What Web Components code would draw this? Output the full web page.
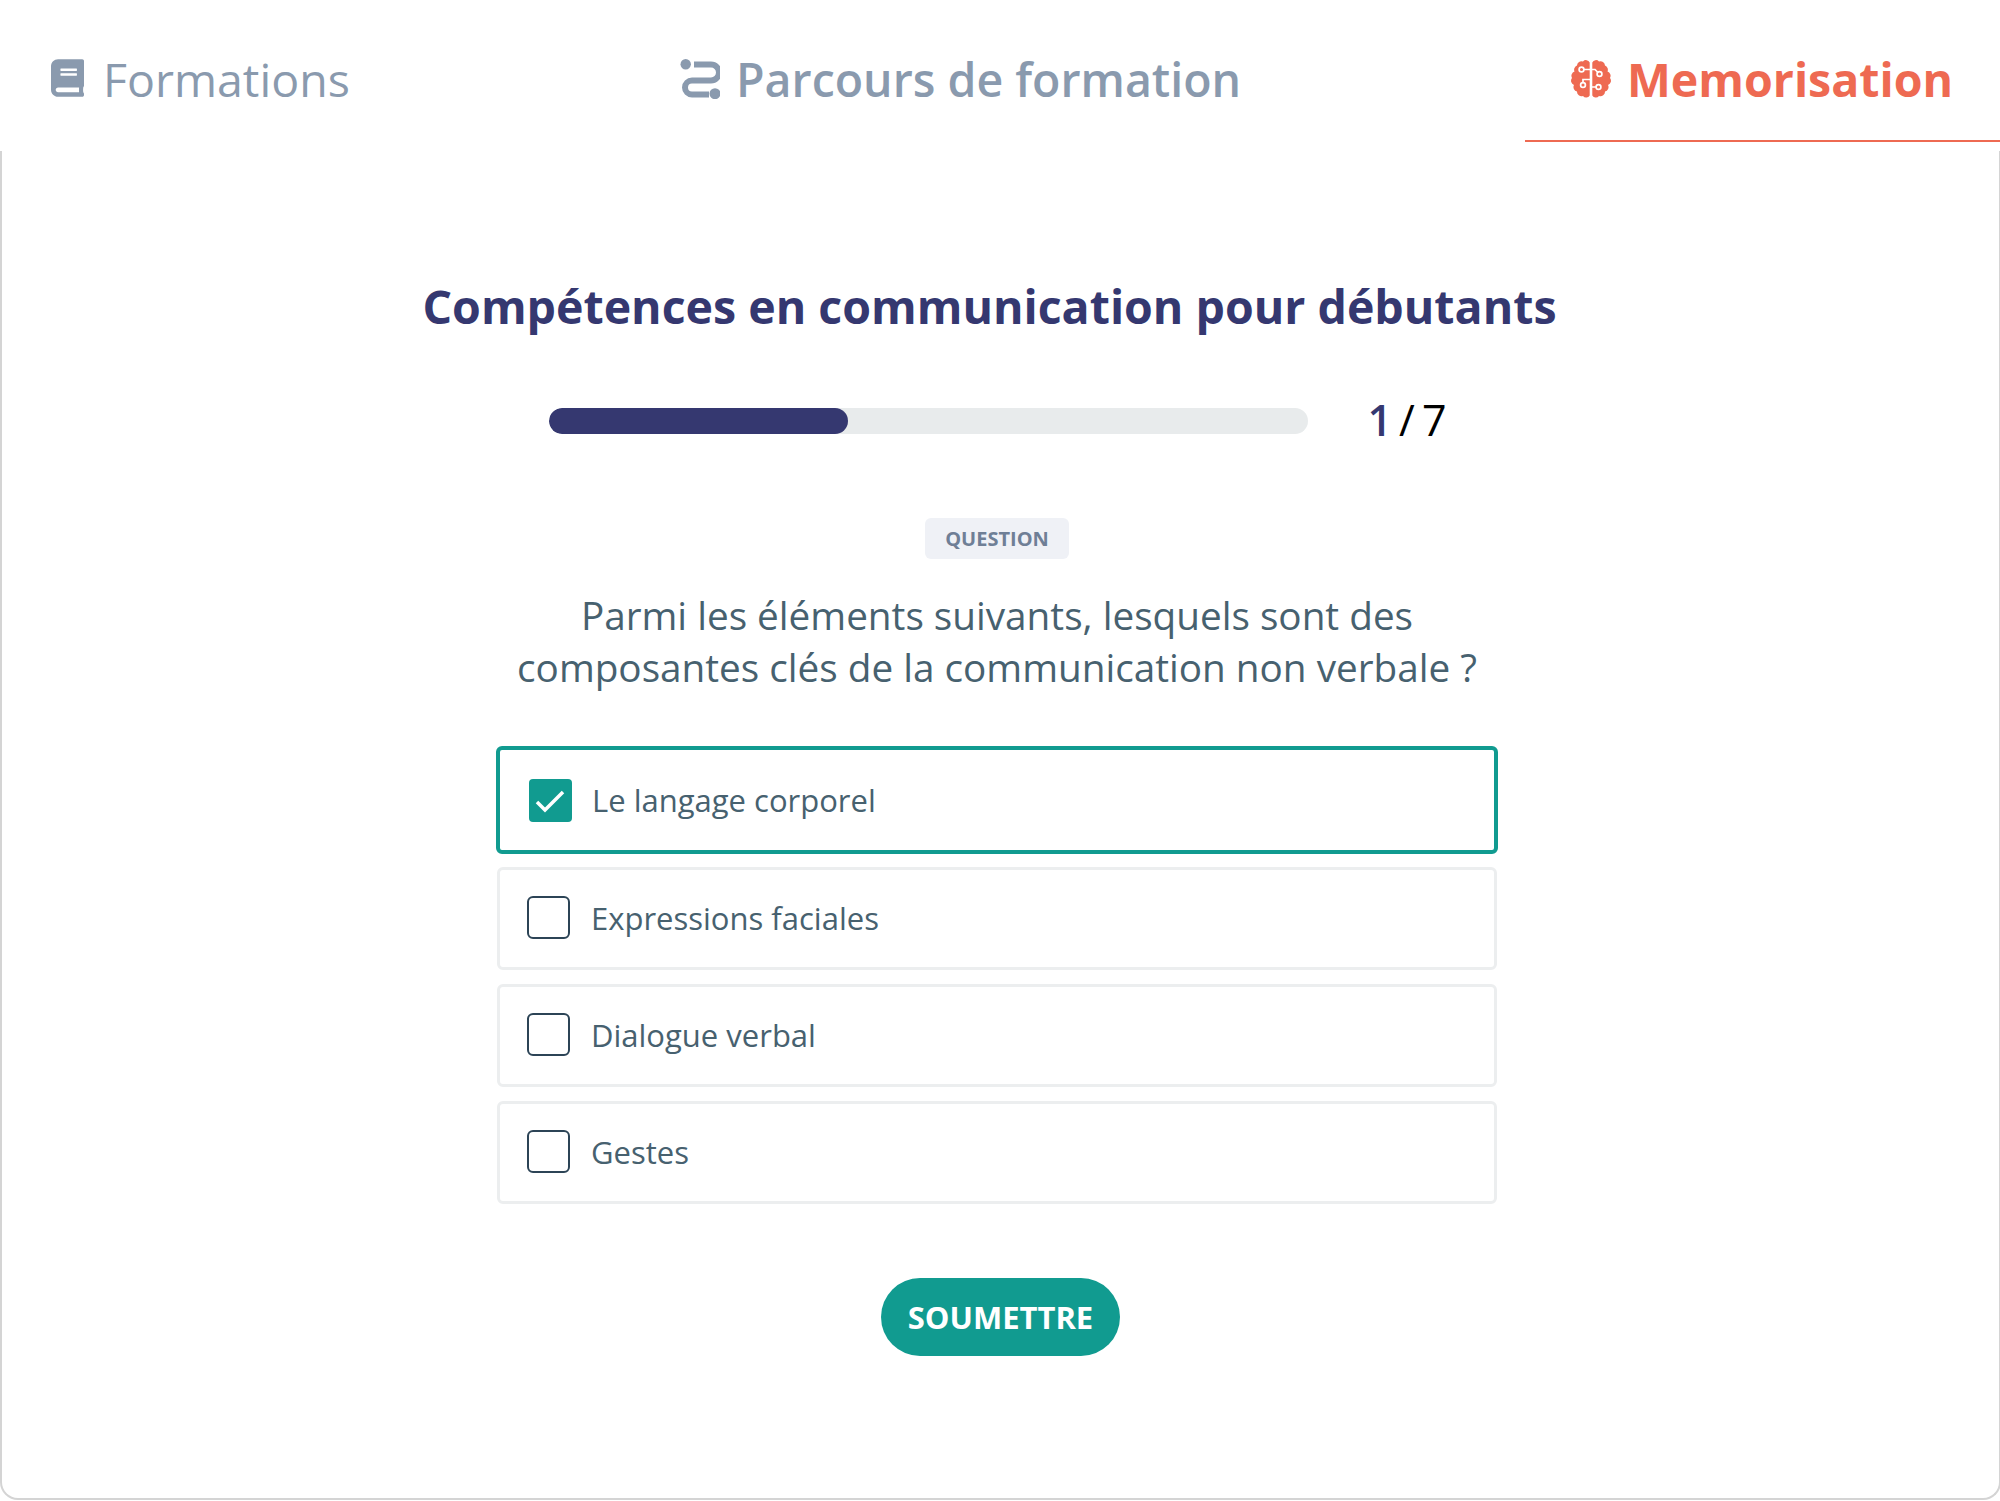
<!DOCTYPE html>
<html lang="fr">
<head>
<meta charset="utf-8">
<title>Memorisation</title>
<style>
  html, body { margin: 0; background: #fff; overflow: hidden; }
  body { font-family: "Open Sans", "Noto Sans", sans-serif; width: 2000px; height: 1501px; }
</style>
</head>
<body>
<tab-bar>
  <nav-tab style="--pad:51px;--gap:19px;--w:400;--size:46.500px">
    <svg slot="icon" width="33" height="38" viewBox="0 0 448 512" fill="#8a9aae"><path d="M448 360V24c0-13.3-10.7-24-24-24H96C43 0 0 43 0 96v320c0 53 43 96 96 96h328c13.3 0 24-10.7 24-24v-16c0-7.500-3.500-14.300-8.900-18.700-4.200-15.400-4.200-59.300 0-74.700 5.400-4.300 8.900-11.100 8.900-18.600zM128 134c0-3.300 2.700-6 6-6h212c3.300 0 6 2.700 6 6v20c0 3.300-2.700 6-6 6H134c-3.300 0-6-2.700-6-6v-20zm0 64c0-3.300 2.700-6 6-6h212c3.300 0 6 2.700 6 6v20c0 3.300-2.700 6-6 6H134c-3.300 0-6-2.700-6-6v-20zm253.400 250H96c-17.700 0-32-14.300-32-32 0-17.600 14.400-32 32-32h285.400c-1.900 17.100-1.900 46.900 0 64z"/></svg>
    Formations
  </nav-tab>
  <nav-tab style="--pad:0px;--gap:16px;--w:600;--size:46.500px">
    <svg slot="icon" width="40" height="40" viewBox="10 8 40 40" fill="#8a9aae"><circle cx="15.700" cy="13.300" r="5.200"/><circle cx="45" cy="42.700" r="5.500"/><path d="M24 13.500H41a8 8 0 0 1 0 16H22a7 7 0 0 0 0 14H39" fill="none" stroke="#8a9aae" stroke-width="6"/></svg>
    Parcours de formation
  </nav-tab>
  <nav-tab active style="--pad:46px;--gap:16px;--w:700;--size:46.500px">
    <svg slot="icon" width="40" height="40" viewBox="0 0 40 40">
      <g fill="#ee6a52">
        <path d="M18.700 3.500A4 4 0 0 0 12 2.500A4.500 4.500 0 0 0 6 6.500A4.500 4.500 0 0 0 3.500 12.500A4.500 4.500 0 0 0 1 19A4.500 4.500 0 0 0 3 26A4.500 4.500 0 0 0 6 32.500A4.500 4.500 0 0 0 12 37A4 4 0 0 0 18.700 36.500Z"/>
        <path d="M21.300 3.500A4 4 0 0 1 28 2.500A4.500 4.500 0 0 1 34 6.500A4.500 4.500 0 0 1 36.500 12.500A4.500 4.500 0 0 1 39 19A4.500 4.500 0 0 1 37 26A4.500 4.500 0 0 1 34 32.500A4.500 4.500 0 0 1 28 37A4 4 0 0 1 21.300 36.500Z"/>
      </g>
      <g fill="none" stroke="#fff" stroke-width="1.700">
        <path d="M13 10.500H24L27 13.500M12 23.500V20.500H20M20 28H25"/>
        <circle cx="10.500" cy="10.500" r="2.400"/><circle cx="28.500" cy="15" r="2.400"/>
        <circle cx="12" cy="26" r="2.400"/><circle cx="27.500" cy="28" r="2.400"/>
      </g>
    </svg>
    Memorisation
  </nav-tab>
</tab-bar>

<quiz-panel>
  <quiz-title>Compétences en communication pour débutants</quiz-title>
  <quiz-progress value="1" total="7" percent="39.500"></quiz-progress>
  <quiz-badge>QUESTION</quiz-badge>
  <quiz-question>Parmi les éléments suivants, lesquels sont des<br>composantes clés de la communication non verbale ?</quiz-question>
  <quiz-options>
    <quiz-option checked>Le langage corporel</quiz-option>
    <quiz-option>Expressions faciales</quiz-option>
    <quiz-option>Dialogue verbal</quiz-option>
    <quiz-option>Gestes</quiz-option>
  </quiz-options>
  <quiz-button>SOUMETTRE</quiz-button>
</quiz-panel>

<script>
(function () {
  // small helper: every element is a shadow root with a fixed template
  function define(name, html) {
    class El extends HTMLElement {
      constructor() {
        super();
        this.attachShadow({ mode: 'open' }).innerHTML = html;
      }
    }
    customElements.define(name, El);
  }

  define('tab-bar', `
    <style>
      :host{ display:grid; grid-template-columns:680px 845px 475px; height:151px; box-sizing:border-box; }
    </style>
    <slot></slot>`);

  define('nav-tab', `
    <style>
      :host{
        display:flex; align-items:flex-start; box-sizing:border-box;
        height:141px; padding:46px 0 0 var(--pad,0); gap:var(--gap,20px);
        font:var(--w,400) var(--size,48px)/66px "Open Sans",sans-serif; color:#8a9aae;
        white-space:nowrap;
      }
      :host([active]){ color:#ee6a52; border-bottom:2px solid #ee6a52; height:142px; }
      ::slotted(svg){ flex:none; margin-top:13px; }
    </style>
    <slot name="icon"></slot><slot></slot>`);

  define('quiz-panel', `
    <style>
      :host{
        display:flex; flex-direction:column; align-items:center;
        box-sizing:border-box; width:2001px; height:1349px;
        padding:0 7px 0 0;
        border:2px solid #d4d4d4; border-top:0; border-radius:0 0 18px 18px;
      }
    </style>
    <slot></slot>`);

  define('quiz-title', `
    <style>
      :host{
        display:block; margin:124px 15px 0 0; white-space:nowrap;
        font:700 46.500px/62px "Open Sans",sans-serif; color:#353870;
      }
    </style>
    <slot></slot>`);

  class QuizProgress extends HTMLElement {
    constructor() {
      super();
      const root = this.attachShadow({ mode: 'open' });
      root.innerHTML = `
        <style>
          :host{ display:flex; align-items:center; gap:60px; width:897px; margin-top:64px; height:40px; }
          .track{ width:759px; height:26px; border-radius:13px; background:#e8ebec; overflow:hidden; flex:none; }
          .fill{ height:100%; border-radius:13px; background:#353870; }
          .count{ display:flex; gap:7px; margin-bottom:2px; font:500 43px/40px "Open Sans",sans-serif; color:#000; white-space:nowrap; }
          .count b{ font-weight:600; color:#353870; }
          .count i{ font-style:normal; }
        </style>
        <div class="track"><div class="fill"></div></div>
        <div class="count"><b></b><i>/</i><span></span></div>`;
      root.querySelector('.fill').style.width = this.getAttribute('percent') + '%';
      root.querySelector('b').textContent = this.getAttribute('value');
      root.querySelector('span').textContent = this.getAttribute('total');
    }
  }
  customElements.define('quiz-progress', QuizProgress);

  define('quiz-badge', `
    <style>
      :host{
        display:block; box-sizing:border-box; width:144px; height:41px; margin-top:77px;
        border-radius:6px; background:#eff1f6; text-align:center;
        font:700 20px/41px "Open Sans",sans-serif; color:#6f7f96;
      }
    </style>
    <slot></slot>`);

  define('quiz-question', `
    <style>
      :host{
        display:block; margin-top:30px; text-align:center; white-space:nowrap;
        font:400 38.700px/52px "Open Sans",sans-serif; color:#47616f;
      }
    </style>
    <slot></slot>`);

  define('quiz-options', `
    <style>
      :host{ display:flex; flex-direction:column; gap:14px; width:1000px; margin-top:53px; }
    </style>
    <slot></slot>`);

  class QuizOption extends HTMLElement {
    constructor() {
      super();
      const root = this.attachShadow({ mode: 'open' });
      root.innerHTML = `
        <style>
          :host{
            display:flex; align-items:center; box-sizing:border-box; height:103px;
            padding:0 0 2px 27px; gap:21px;
            border:3px solid #eceeef; border-radius:6px;
            font:400 31px/44px "Open Sans",sans-serif; color:#47616f;
          }
          :host([checked]){
            height:108px; margin:0 -1px -1px; padding:0 0 0 29px; gap:20px;
            border:4px solid #119b90;
          }
          .box{ width:43px; height:43px; box-sizing:border-box; border:2px solid #2c4456; border-radius:6px; flex:none; display:flex; }
          :host([checked]) .box{ border:0; background:#119b90; border-radius:4px; }
          svg{ display:none; }
          :host([checked]) svg{ display:block; }
        </style>
        <span class="box"><svg width="43" height="43" viewBox="0 0 43 43"><path d="M8 23l8 8L34 13" fill="none" stroke="#fff" stroke-width="3.500"/></svg></span>
        <span><slot></slot></span>`;
    }
  }
  customElements.define('quiz-option', QuizOption);

  define('quiz-button', `
    <style>
      :host{
        display:block; box-sizing:border-box; width:239px; height:78px; margin:74px 0 0 7px;
        border-radius:39px; background:#119b90; text-align:center; cursor:pointer;
        font:700 31px/78px "Open Sans",sans-serif; color:#fff;
      }
    </style>
    <slot></slot>`);
})();
</script>
</body>
</html>
